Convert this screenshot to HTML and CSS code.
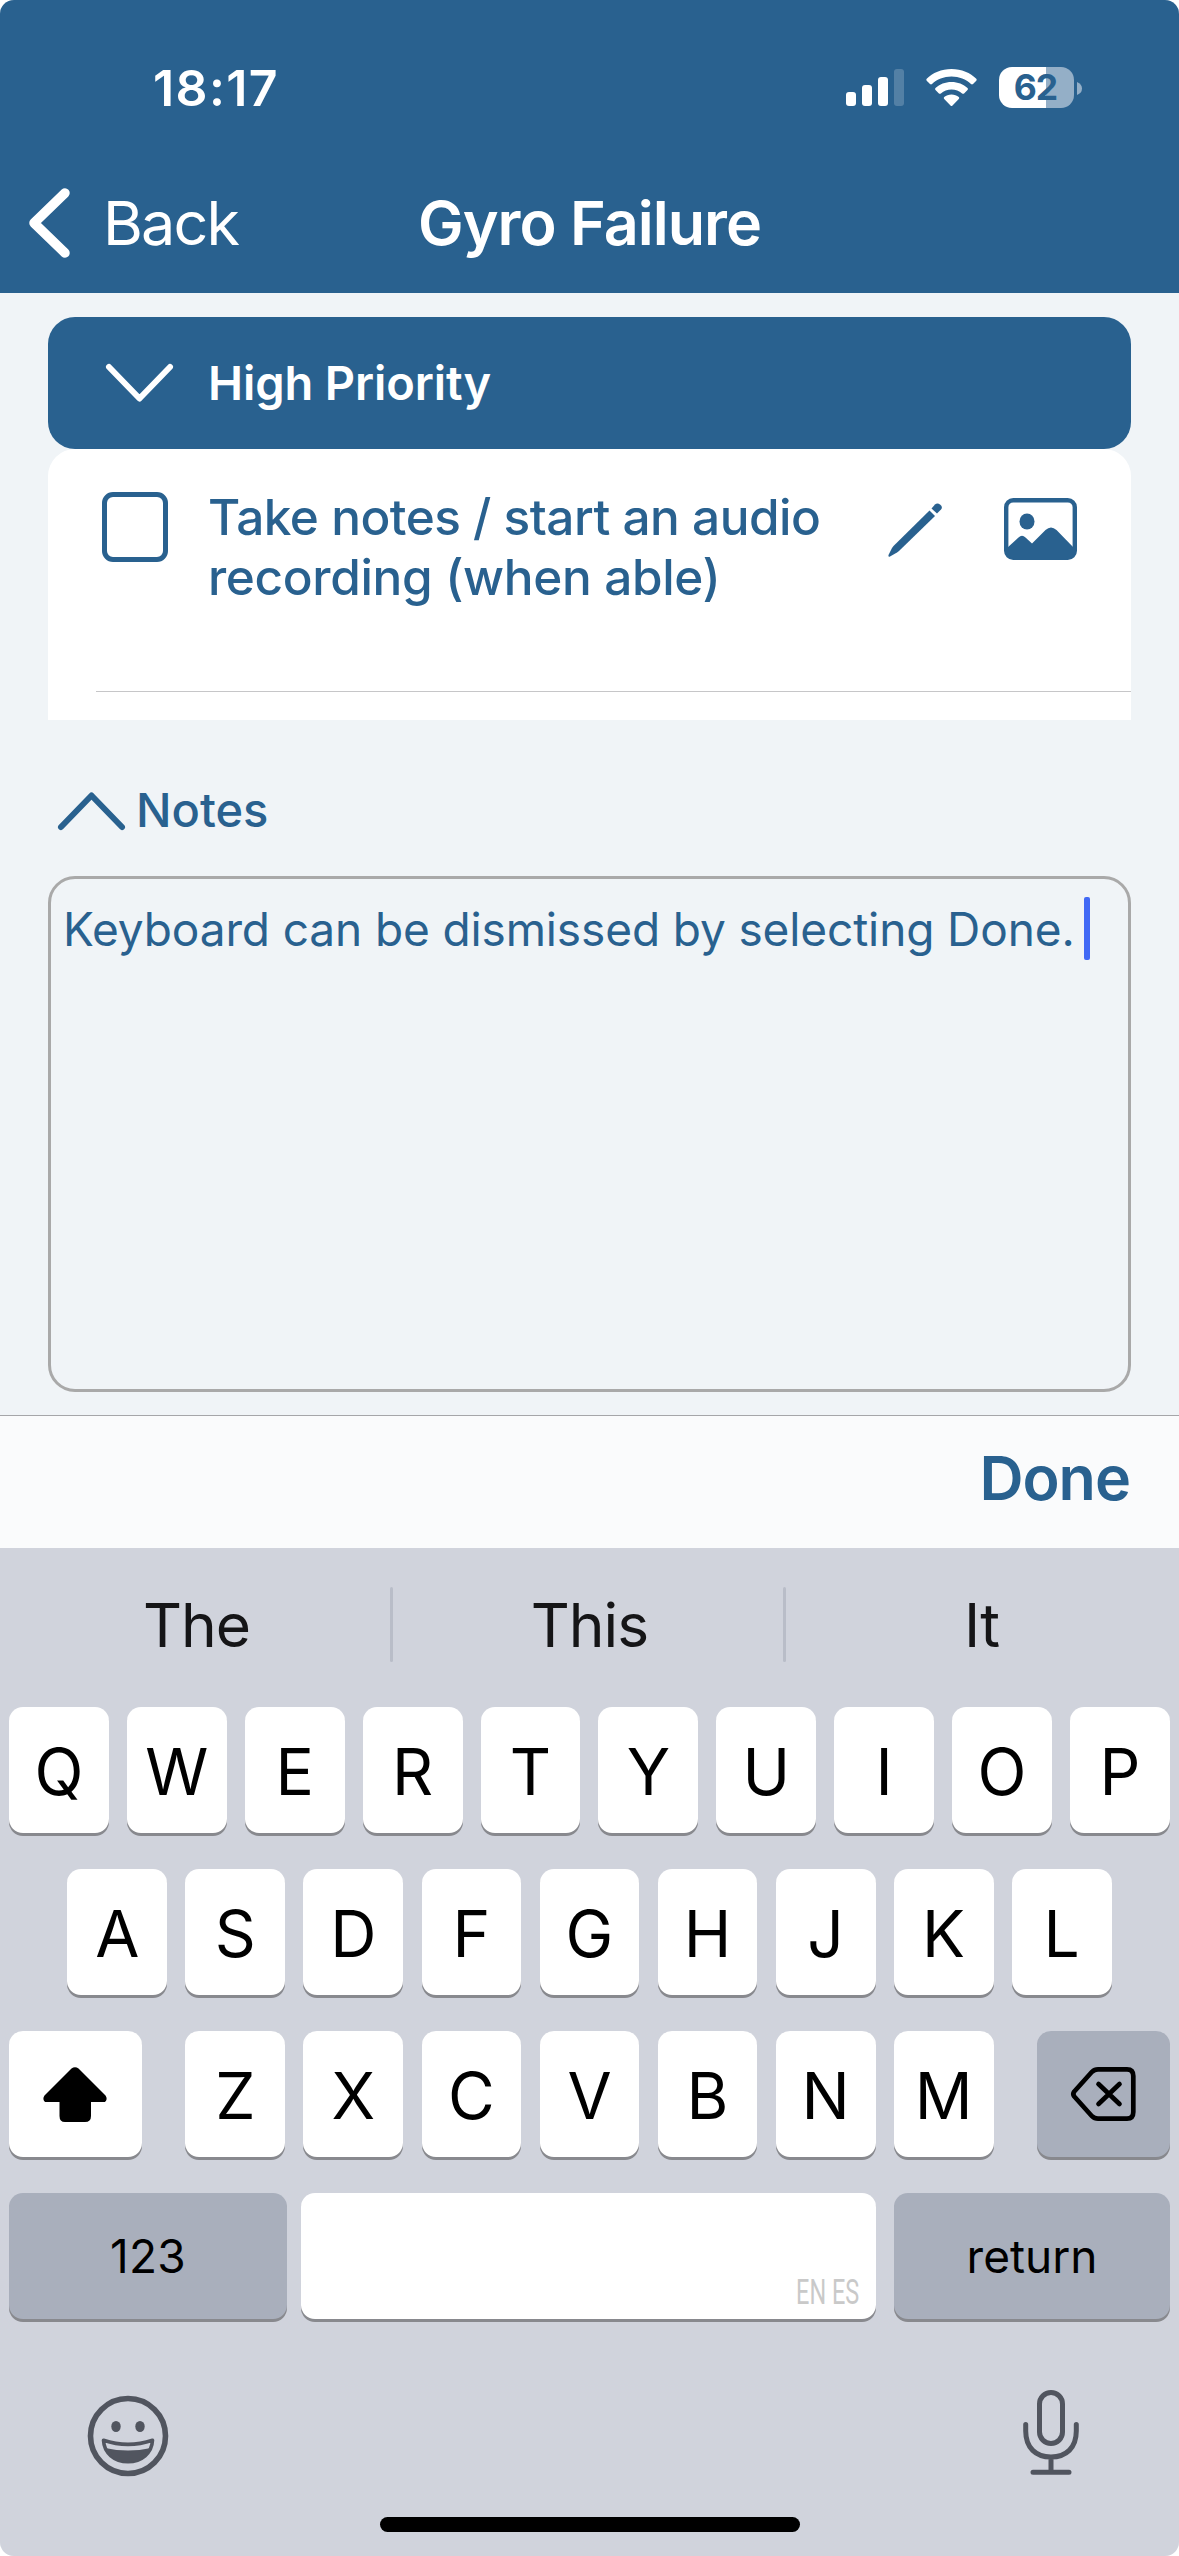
FILE: index.html
```html
<!DOCTYPE html>
<html lang="en">
<head>
<meta charset="utf-8">
<title>Gyro Failure</title>
<link rel="stylesheet" href="styles.css">
</head>
<body>
<div class="screen">
  <header class="header">
    <div class="status">
      <span class="time">18:17</span>
      <div class="indicators">
        <svg class="signal" width="58" height="37" viewBox="0 0 58 37" fill="#fff"><rect x="0" y="23" width="10" height="14" rx="3"/><rect x="16" y="16" width="10" height="21" rx="3"/><rect x="32" y="8" width="10" height="29" rx="3"/><rect x="48" y="0" width="10" height="37" rx="3" opacity=".2"/></svg>
        <svg class="wifi" width="51" height="37" viewBox="0 0 51 37" fill="#fff"><path d="M25.500 0C35.500 0 44.500 3.800 50.300 9.800Q51.200 10.800 50.300 11.800L47 15Q46 15.900 45 15C40 10.300 33.200 7.500 25.500 7.500S11 10.300 6 15Q5 15.900 4 15L.7 11.800Q-.2 10.800.7 9.800C6.500 3.800 15.500 0 25.500 0Z"/><path d="M25.500 13C31.800 13 37.400 15.300 41.500 19.100Q42.500 20.100 41.500 21.100L38.100 24.400Q37.200 25.300 36.100 24.400C33.200 22 29.600 20.600 25.500 20.600S17.800 22 14.900 24.400Q13.800 25.300 12.900 24.400L9.500 21.100Q8.500 20.100 9.500 19.100C13.600 15.300 19.200 13 25.500 13Z"/><path d="M25.500 25.500C28.300 25.500 30.800 26.400 32.800 28Q33.800 28.900 32.800 29.900L26.500 36.400Q25.500 37.400 24.500 36.400L18.200 29.900Q17.200 28.900 18.200 28C20.200 26.400 22.700 25.500 25.500 25.500Z"/></svg>
        <div class="battery"><span class="level">62</span></div>
        <svg class="nub" width="5" height="13" viewBox="0 0 5 13"><path d="M0 0Q5 2 5 6.500T0 13Z" fill="#94afc7"/></svg>
      </div>
    </div>
    <nav class="nav">
      <a class="back"><svg width="41" height="70" viewBox="0 0 41 70" fill="none" stroke="#fff" stroke-width="9.500" stroke-linecap="round" stroke-linejoin="round"><path d="M36 5 5 35 36 65"/></svg><span>Back</span></a>
      <h1 class="title">Gyro Failure</h1>
      <span></span>
    </nav>
  </header>

  <main class="content">
    <section class="group">
      <div class="group-head">
        <svg width="67" height="38" viewBox="0 0 67 38" fill="none" stroke="#fff" stroke-width="6" stroke-linecap="round" stroke-linejoin="round"><path d="M3 3 33.500 34.500 64 3"/></svg>
        <span class="group-title">High Priority</span>
      </div>
      <div class="card">
        <div class="task">
          <span class="checkbox"></span>
          <p class="task-text">Take notes / start an audio<br><span class="second">recording (when able)</span></p>
          <svg class="pencil" width="54" height="54" viewBox="0 0 54 54" fill="#29618f"><path d="M41.500 7.500 47 13 11 48 9 49.500 2 53.500Q0 54.500.5 52L4 45 5.500 43Z"/><path d="M43.500 5.500 47 1.500Q49.500-.5 52.300 1.800T53 6.500L49 10.500Z"/></svg>
          <svg class="picture" width="73" height="62" viewBox="0 0 73 62"><rect x="2.200" y="2.200" width="68.600" height="57.600" rx="7" fill="none" stroke="#29618f" stroke-width="4.400"/><ellipse cx="23" cy="23.500" rx="7.500" ry="8" fill="#29618f"/><path d="M3 50 14.500 39.500Q18 36 21.500 39.500L28 45.500 41.500 32Q47 27 52.500 32L70 50V56Q70 60 66 60H7Q3 60 3 56Z" fill="#29618f"/></svg>
        </div>
      </div>
    </section>

    <section class="notes">
      <div class="notes-head">
        <svg width="67" height="38" viewBox="0 0 67 38" fill="none" stroke="#29618f" stroke-width="6" stroke-linecap="round" stroke-linejoin="round"><path d="M3 35 33.500 3.500 64 35"/></svg>
        <span class="notes-title">Notes</span>
      </div>
      <div class="editor"><span class="note">Keyboard can be dismissed by selecting Done.</span><span class="caret"></span></div>
    </section>
  </main>

  <div class="toolbar"><span class="done">Done</span></div>

  <div class="keyboard">
    <div class="suggestions">
      <span class="word">The</span><i class="divider"></i><span class="word">This</span><i class="divider"></i><span class="word">It</span>
    </div>
    <div class="keys">
      <div class="row"><b class="key">Q</b><b class="key">W</b><b class="key">E</b><b class="key">R</b><b class="key">T</b><b class="key">Y</b><b class="key">U</b><b class="key">I</b><b class="key">O</b><b class="key">P</b></div>
      <div class="row middle"><b class="key">A</b><b class="key">S</b><b class="key">D</b><b class="key">F</b><b class="key">G</b><b class="key">H</b><b class="key">J</b><b class="key">K</b><b class="key">L</b></div>
      <div class="row spread">
        <b class="key wide"><svg class="shift" width="64" height="55" viewBox="0 0 64 55"><path d="M28.500 1.500Q32 -1 35.500 1.500L62.500 28.500Q65 32 62 35H48V49Q48 55 42 55H22Q16.500 55 16.500 49V35H2Q-1 32 1.500 28.500Z"/></svg></b>
        <div class="letters"><b class="key">Z</b><b class="key">X</b><b class="key">C</b><b class="key">V</b><b class="key">B</b><b class="key">N</b><b class="key">M</b></div>
        <b class="key wide dark"><svg width="65" height="54" viewBox="0 0 65 54" fill="none" stroke="#000" stroke-width="4.700" stroke-linecap="round" stroke-linejoin="round"><path d="M27 2.300H56Q62.300 2.300 62.300 9V45Q62.300 51.700 56 51.700H27Q23.500 51.700 21 49.200L3.300 29.500Q1.300 27 3.300 24.500L21 4.800Q23.500 2.300 27 2.300Z"/><path d="M27.500 17 48.500 37M48.500 17 27.500 37"/></svg></b>
      </div>
      <div class="row bottom">
        <b class="key dark numbers">123</b>
        <b class="key space"><span class="langs">EN ES</span></b>
        <b class="key dark return">return</b>
      </div>
    </div>
    <div class="tray">
      <svg class="emoji" width="82" height="82" viewBox="0 0 82 82" fill="none" stroke="#51555f" stroke-width="5.600"><circle cx="41" cy="41" r="37.500"/><ellipse cx="29" cy="31.500" rx="4.700" ry="5.600" fill="#51555f" stroke="none"/><ellipse cx="53" cy="31.500" rx="4.700" ry="5.600" fill="#51555f" stroke="none"/><path d="M16.500 45.300Q41 53.500 65.500 45.300C65 58 54.500 66.800 41 66.800S17 58 16.500 45.300Z" stroke-width="3.600" stroke-linejoin="round"/><path d="M18 53Q41 58 64 53C61 62 52 67 41 67S21 62 18 53Z" fill="#51555f" stroke="none"/></svg>
      <svg width="56" height="85" viewBox="0 0 56 85" fill="none" stroke="#51555f" stroke-width="5" stroke-linecap="round"><rect x="16.500" y="2.500" width="23" height="51" rx="11.500"/><path d="M2.700 34.500V41C2.700 58 13 67 28 67S53.300 58 53.300 41V34.500M28 67V82M10 82.300H46"/></svg>
    </div>
    <div class="home"></div>
  </div>
</div>
</body>
</html>
```
FILE: styles.css
```css
* { box-sizing: border-box; }
body { margin: 0; background: #fff; font-family: Inter, "Liberation Sans", sans-serif; }
.screen { width: 1179px; height: 2556px; border-radius: 14px; overflow: hidden; background: #f0f4f7; display: flex; flex-direction: column; }
svg { display: block; flex: none; overflow: visible; }
span, b, h1, p { white-space: nowrap; }

.header { height: 293px; background: #29618f; color: #fff; padding-top: 58px; }
.status { height: 60px; display: flex; justify-content: space-between; padding: 0 97px 0 153px; }
.time { font-size: 50px; line-height: 60px; font-weight: 600; letter-spacing: 1.400px; }
.indicators { display: flex; align-items: flex-start; padding-top: 9px; }
.signal { margin: 2px 22px 0 0; }
.wifi { margin: 2px 22px 0 0; }
.battery { width: 75px; height: 41px; border-radius: 13px; background: linear-gradient(90deg, #fff 47px, #94afc7 47px); display: flex; align-items: center; justify-content: center; }
.level { color: #29618f; font-size: 35.500px; line-height: 41px; font-weight: 700; letter-spacing: -1px; padding-right: 2px; }
.nub { margin: 15px 0 0 3px; }
.nav { margin-top: 65px; height: 80px; display: grid; grid-template-columns: 1fr auto 1fr; align-items: center; }
.back { display: flex; align-items: center; gap: 33px; padding-left: 29px; font-size: 61px; line-height: 80px; letter-spacing: -1.800px; }
.title { margin: 0; font-size: 61px; line-height: 80px; font-weight: 600; letter-spacing: -1px; }

.content { height: 1122px; padding: 24px 48px 0; }
.group-head { height: 132px; border-radius: 27px; background: #29618f; color: #fff; display: flex; align-items: center; padding-left: 58px; gap: 35px; }
.group-title { font-size: 47px; line-height: 60px; font-weight: 600; letter-spacing: -.1px; }
.card { height: 271px; background: #fff; border-radius: 27px 27px 0 0; padding: 0 0 28px 48px; }
.task { height: 243px; border-bottom: 1px solid #c6c6c8; display: flex; padding: 43px 54px 0 6px; }
.checkbox { width: 66px; height: 70px; border: 5px solid #29618f; border-radius: 11px; flex: none; }
.task-text { margin: -5px 0 0 40px; width: 680px; font-size: 49.500px; line-height: 60px; font-weight: 500; letter-spacing: -.5px; color: #29618f; }
.second { letter-spacing: -.35px; }
.pencil { margin-top: 11px; }
.picture { margin: 6px 0 0 62px; }
.notes { padding-top: 61px; }
.notes-head { height: 60px; display: flex; align-items: center; padding-left: 10px; gap: 11px; }
.notes-title { margin-top: -2px; font-size: 47px; line-height: 60px; font-weight: 500; color: #29618f; }
.editor { margin-top: 35px; height: 516px; border: 3px solid #a9a9a9; border-radius: 27px; display: flex; padding: 18px 0 0 12px; }
.note { padding-top: 1px; font-size: 46px; line-height: 63px; letter-spacing: -.12px; color: #29618f; width: 1021px; flex: none; }
.caret { width: 6px; height: 63px; border-radius: 2px; background: #4169f5; }

.toolbar { height: 133px; border-top: 1px solid #a5a6a9; background: #fafbfc; display: flex; justify-content: flex-end; padding-right: 49px; }
.done { font-size: 61px; line-height: 125px; font-weight: 600; color: #29618f; letter-spacing: -1px; }

.keyboard { flex: 1; background: #d0d3dc; display: flex; flex-direction: column; }
.suggestions { height: 159px; display: grid; grid-template-columns: 390px 3px 390px 3px 393px; align-items: start; padding-top: 39px; }
.word { text-align: center; font-size: 60.500px; line-height: 76px; color: #151517; letter-spacing: -1px; padding-left: 3px; }
.word:last-child { padding: 0 2px 0 0; }
.divider { width: 3px; height: 75px; background: #b9bdc8; border-radius: 2px; }
.keys { padding: 0 9px; display: flex; flex-direction: column; gap: 36px; }
.row, .letters { display: flex; gap: 18px; }
.row.middle, .letters { gap: 18.150px; }
.middle { justify-content: center; }
.spread { justify-content: space-between; }
.row.spread, .row.bottom { gap: 0; }
.key { width: 99.900px; height: 126px; border-radius: 14px; background: #fff; box-shadow: 0 3px 0 #88898e; display: flex; align-items: center; justify-content: center; font-size: 64px; font-weight: 400; line-height: 126px; flex: none; padding-top: 3px; }
.key.wide { width: 133px; padding: 0; }
.shift { margin-right: 2px; }
.key.dark { background: #a9afbc; }
.key.numbers { width: 278px; font-size: 46px; padding: 0; letter-spacing: .2px; }
.space { width: 575px; margin: 0 18px 0 14px; justify-content: flex-end; align-items: flex-end; padding: 0 17px 5px 0; }
.key.return { width: 276px; font-size: 46px; padding: 0; }
.langs { font-family: Roboto, sans-serif; font-size: 35px; line-height: 42px; color: #c9c9c9; transform: scaleX(.67); transform-origin: 100% 50%; }
.tray { height: 86px; margin-top: 71px; padding: 0 100px 0 86.500px; display: flex; justify-content: space-between; }
.emoji { margin-top: 5px; }
.home { width: 420px; height: 15px; border-radius: 8px; background: #000; margin: 41px auto 0; }
```
